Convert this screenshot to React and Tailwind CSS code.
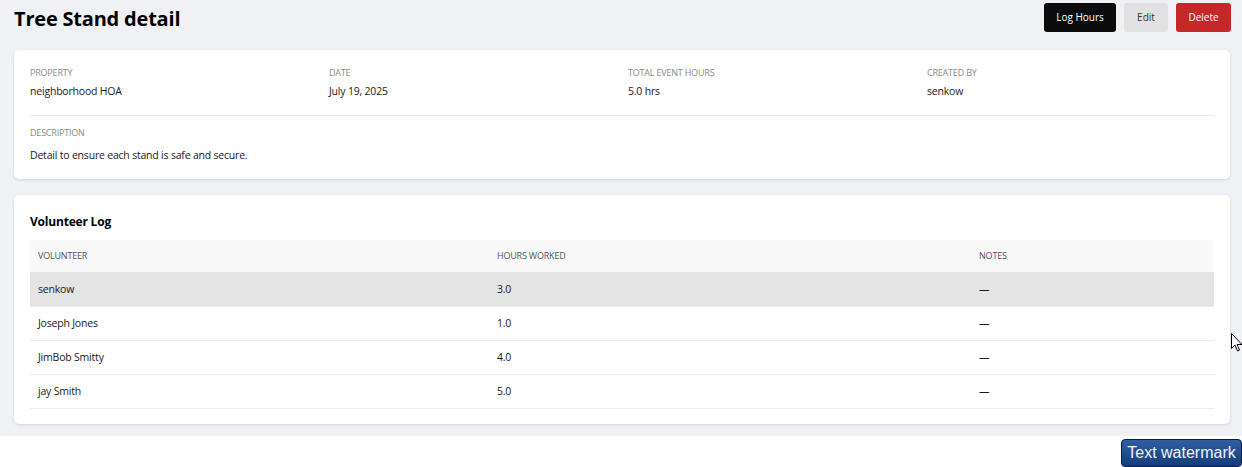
import React from 'react';

const rows = [
    { name: 'senkow', hours: '3.0', notes: '—', active: true },
    { name: 'Joseph Jones', hours: '1.0', notes: '—' },
    { name: 'JimBob Smitty', hours: '4.0', notes: '—' },
    { name: 'jay Smith', hours: '5.0', notes: '—' },
];

const Field = ({ label, value }) => (
    <div>
        <p className="text-[9px] uppercase text-[#8a8a8a] leading-[12px] tracking-[-0.2px]">{label}</p>
        <p className="text-[10.5px] text-[#1a1a1a] mt-[5px] leading-[14px] tracking-[-0.2px]">{value}</p>
    </div>
);

const App = () => {
    return (
        <div className="relative min-h-[467px] bg-white" style={{ fontFamily: '"Open Sans", "Noto Sans", sans-serif' }}>
            <div className="bg-[#f0f1f5] pl-[14px] pr-[12px] pb-[12px]">
                {/* Header */}
                <div className="flex items-center justify-between h-[33px] pt-[2px]">
                    <h1 className="text-[20px] font-bold text-black tracking-[-0.2px] mt-[2px]">Tree Stand detail</h1>
                    <div className="flex gap-2 mr-[-1px]">
                        <button className="h-[29px] w-[72px] rounded-[3px] bg-[#0b0b0b] text-white text-[10px] font-medium">Log Hours</button>
                        <button className="h-[29px] w-[44px] rounded-[3px] bg-[#e1e1e1] text-[#333] text-[10px]">Edit</button>
                        <button className="h-[29px] w-[55px] rounded-[3px] bg-[#c62828] text-white text-[10px] font-medium">Delete</button>
                    </div>
                </div>

                {/* Details */}
                <section className="mt-[17px] bg-white rounded-[5px] shadow-[0_1px_3px_rgba(0,0,0,0.12)] px-4 pt-[17px] pb-[17px]">
                    <div className="grid grid-cols-4 gap-3">
                        <Field label="Property" value="neighborhood HOA" />
                        <Field label="Date" value="July 19, 2025" />
                        <Field label="Total Event Hours" value="5.0 hrs" />
                        <Field label="Created By" value="senkow" />
                    </div>
                    <div className="border-t border-[#e8e8e8] mt-[17px] pt-[11px]">
                        <p className="text-[9px] uppercase text-[#8a8a8a] leading-[12px] tracking-[-0.2px]">Description</p>
                        <p className="text-[10.5px] text-[#1a1a1a] mt-[9px] leading-[14px] tracking-[-0.2px]">Detail to ensure each stand is safe and secure.</p>
                    </div>
                </section>

                {/* Volunteer log */}
                <section className="mt-4 bg-white rounded-[5px] shadow-[0_1px_3px_rgba(0,0,0,0.12)] px-4 pt-[19px] pb-[15px]">
                    <h2 className="text-[12px] font-bold text-black leading-[16px] tracking-[-0.2px]">Volunteer Log</h2>
                    <table className="w-full mt-[10px] text-left border-collapse">
                        <thead>
                            <tr className="bg-[#f9f9f9] h-[32px]">
                                <th className="pl-2 w-[459px] text-[9px] font-normal uppercase text-[#555] tracking-[-0.2px]">Volunteer</th>
                                <th className="pl-2 w-[482px] text-[9px] font-normal uppercase text-[#555] tracking-[-0.2px]">Hours Worked</th>
                                <th className="pl-2 text-[9px] font-normal uppercase text-[#555] tracking-[-0.2px]">Notes</th>
                            </tr>
                        </thead>
                        <tbody>
                            {rows.map(r => (
                                <tr key={r.name} className={`h-[34px] border-b border-[#ececec] ${r.active ? 'bg-[#e4e4e4]' : ''}`}>
                                    <td className="pl-2 pt-[2px] text-[10.5px] text-[#1a1a1a] tracking-[-0.2px]">{r.name}</td>
                                    <td className="pl-2 pt-[2px] text-[10.5px] text-[#1a1a1a] tracking-[-0.2px]">{r.hours}</td>
                                    <td className="pl-2 pt-[2px] text-[10.5px] text-[#1a1a1a]">{r.notes}</td>
                                </tr>
                            ))}
                        </tbody>
                    </table>
                </section>
            </div>

            {/* cursor */}
            <svg className="absolute left-[1231px] top-[333px]" width="12" height="19" viewBox="0 0 12 19">
                <path d="M0.5 0.5 L0.5 15.5 L4 12 L6.5 18 L8.5 17 L6 11.5 L11 11.5 Z" fill="white" stroke="black" strokeWidth="1" />
            </svg>

            {/* watermark */}
            <div
                className="absolute left-[1121px] top-[439px] w-[121px] h-[28px] rounded-[4px] border border-[#0a1f3f] bg-gradient-to-b from-[#2f5ea3] to-[#143d7a] text-[#eef3fb] text-[16px] flex items-center justify-center"
                style={{ fontFamily: '"Liberation Sans", Arial, sans-serif' }}
            >
                Text watermark
            </div>
        </div>
    );
};

export default App;
